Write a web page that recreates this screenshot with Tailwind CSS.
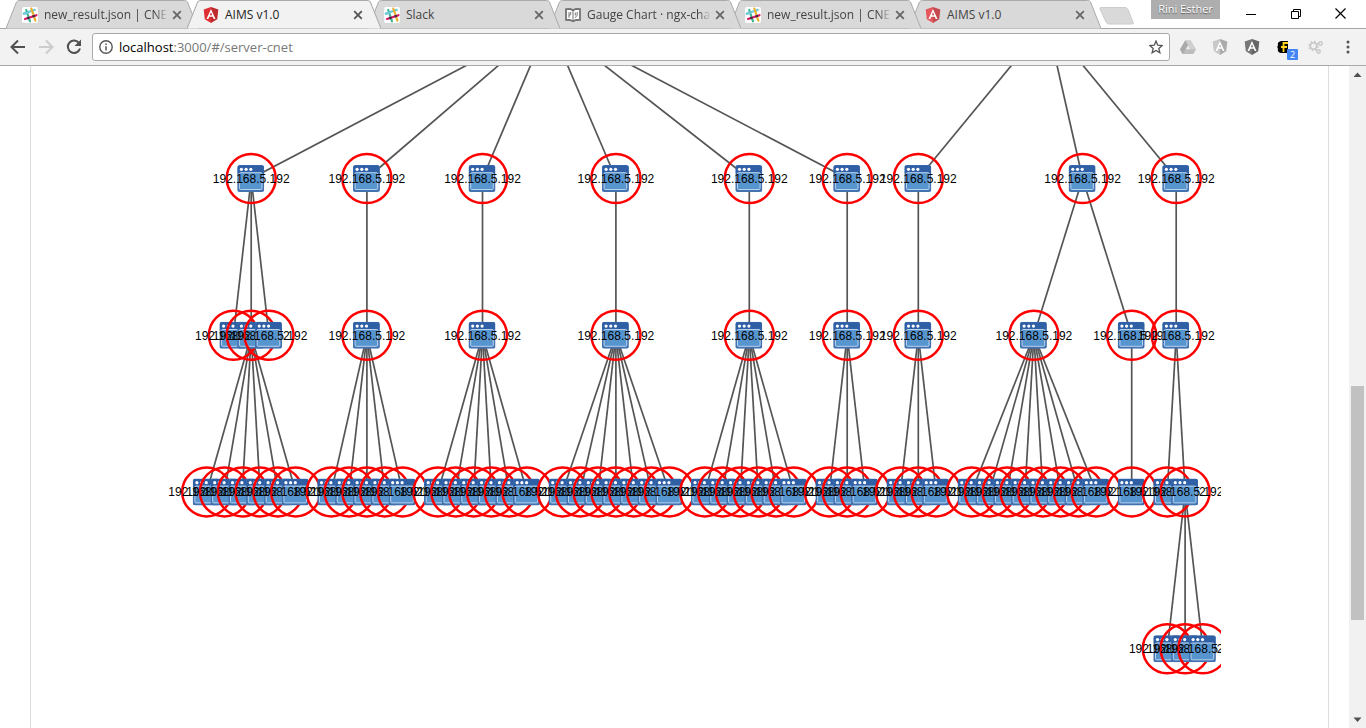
<!DOCTYPE html>
<html lang="en">
<head>
<meta charset="utf-8">
<title>AIMS v1.0</title>
<script src="https://cdn.jsdelivr.net/npm/@tailwindcss/browser@4"></script>
</head>
<body class="flex h-screen flex-col overflow-hidden bg-white font-['Open_Sans','Noto_Sans',sans-serif] text-xs text-[#333]">

<svg class="hidden" aria-hidden="true">
  <symbol id="slack" viewBox="0 0 16 16">
    <rect width="16" height="16" rx="2" fill="#fff"/>
    <g fill="none" stroke-width="2.2" stroke-linecap="round">
      <path d="M1.8 6.5 12.8 2.9" stroke="#70cadb"/>
      <path d="M9.3 1.5 13.4 13.6" stroke="#e9b22e"/>
      <path d="M4.2 3 8 14.4" stroke="#3eb890"/>
      <path d="M1.8 6.9 5.3 5.7" stroke="#70cadb"/>
      <path d="M3 12 14.5 8.2" stroke="#e01765"/>
      <path d="M5.8 11.1 6.8 10.8M11.2 9.3 12.2 9" stroke="#472a49"/>
    </g>
  </symbol>
  <symbol id="angular" viewBox="0 0 16 16">
    <path d="M8 0 15.3 2.6 14.2 12.2 8 16 1.8 12.2.7 2.6Z" fill="currentColor"/>
    <path d="M8 0 15.3 2.6 14.2 12.2 8 16Z" fill="#000" opacity=".14"/>
    <path d="M8 2 3.5 12h1.8l.9-2.3h3.6l.9 2.3h1.8ZM8 5.2 9.2 8.2H6.8Z" fill="#fff" fill-rule="evenodd"/>
  </symbol>
  <symbol id="book" viewBox="0 0 16 16">
    <path d="M1 2.2 5 2 8 3.2 11 2l4 .2v10.6l-4 .2-3 1.3L5 13l-4-.2Z" fill="#fff" stroke="#737373" stroke-width="1.8"/>
    <path d="M8 3.2V14M4 5.2v5.6M5.7 5v2.5L4 8.8M10.3 5.5v3M12.2 5v3.2l-2 2.6" fill="none" stroke="#737373" stroke-width="1"/>
  </symbol>
  <symbol id="x" viewBox="0 0 10 10"><path d="M1.2 1.2 8.8 8.8M8.8 1.2 1.2 8.8" stroke="currentColor" stroke-width="1.8"/></symbol>
  <symbol id="tab" viewBox="0 0 192 29" preserveAspectRatio="none">
    <path d="M0 28.5 10.5 2Q11.500.5 13.500.5H178.500Q180.500.5 181.500 2L192 28.5" fill="currentColor" stroke="#aaa"/>
  </symbol>
  <symbol id="server" viewBox="0 0 27 27">
    <rect x="0" y="0" width="27" height="27" rx="2.500" fill="#4372b0"/>
    <path d="M.5 8V3Q.5.5 3 .5H24Q26.500.5 26.500 3V8Z" fill="#2f5fa5"/>
    <rect x="2.200" y="7.700" width="22.600" height="16.800" rx="1" fill="#5795cf" stroke="#b9d3ee"/>
    <g fill="#fff"><circle cx="4.200" cy="4.300" r="1.600"/><circle cx="8.900" cy="4.300" r="1.600"/><circle cx="13.600" cy="4.300" r="1.600"/></g>
  </symbol>
</svg>

<header class="shrink-0">
  <div class="relative flex h-[29px] border-b border-[#a6a6a6]">
    <nav class="flex h-[29px] pl-[6px]" aria-label="Tabs">
      <div class="relative z-20 flex h-[29px] w-48 items-center text-[#d9d9d9]">
        <svg class="absolute inset-0 h-full w-full"><use href="#tab"/></svg>
        <a href="#" class="relative flex min-w-0 flex-1 items-center gap-1.5 pl-4 text-[#444]"><svg class="size-4 shrink-0"><use href="#slack"/></svg><span class="overflow-hidden whitespace-nowrap mask-r-from-90%">new_result.json | CNET</span></a>
        <button aria-label="Close tab" class="relative mr-4 ml-1 text-[#666]"><svg class="size-2.5"><use href="#x"/></svg></button>
      </div>
      <div class="relative z-30 -ml-[11px] flex h-[29px] w-[194px] items-center text-[#f2f2f2]">
        <svg class="absolute inset-0 h-full w-full"><use href="#tab"/></svg>
        <a href="#" class="relative flex min-w-0 flex-1 items-center gap-1.5 pl-4 text-[#222]"><svg class="size-4 shrink-0 text-[#dd3035]"><use href="#angular"/></svg><span>AIMS v1.0</span></a>
        <button aria-label="Close tab" class="relative mr-[18px] ml-1 text-[#555]"><svg class="size-2.5"><use href="#x"/></svg></button>
      </div>
      <div class="relative z-20 -ml-[13px] flex h-[29px] w-48 items-center text-[#d9d9d9]">
        <svg class="absolute inset-0 h-full w-full"><use href="#tab"/></svg>
        <a href="#" class="relative flex min-w-0 flex-1 items-center gap-1.5 pl-4 text-[#444]"><svg class="size-4 shrink-0"><use href="#slack"/></svg><span>Slack</span></a>
        <button aria-label="Close tab" class="relative mr-4 ml-1 text-[#666]"><svg class="size-2.5"><use href="#x"/></svg></button>
      </div>
      <div class="relative z-10 -ml-[11px] flex h-[29px] w-48 items-center text-[#d9d9d9]">
        <svg class="absolute inset-0 h-full w-full"><use href="#tab"/></svg>
        <a href="#" class="relative flex min-w-0 flex-1 items-center gap-1.5 pl-4 text-[#444]"><svg class="size-4 shrink-0"><use href="#book"/></svg><span class="overflow-hidden whitespace-nowrap mask-r-from-90%">Gauge Chart · ngx-charts</span></a>
        <button aria-label="Close tab" class="relative mr-4 ml-1 text-[#666]"><svg class="size-2.5"><use href="#x"/></svg></button>
      </div>
      <div class="relative z-[5] -ml-[12px] flex h-[29px] w-48 items-center text-[#d9d9d9]">
        <svg class="absolute inset-0 h-full w-full"><use href="#tab"/></svg>
        <a href="#" class="relative flex min-w-0 flex-1 items-center gap-1.5 pl-4 text-[#444]"><svg class="size-4 shrink-0"><use href="#slack"/></svg><span class="overflow-hidden whitespace-nowrap mask-r-from-90%">new_result.json | CNET</span></a>
        <button aria-label="Close tab" class="relative mr-4 ml-1 text-[#666]"><svg class="size-2.5"><use href="#x"/></svg></button>
      </div>
      <div class="relative z-0 -ml-[12px] flex h-[29px] w-48 items-center text-[#d9d9d9]">
        <svg class="absolute inset-0 h-full w-full"><use href="#tab"/></svg>
        <a href="#" class="relative flex min-w-0 flex-1 items-center gap-1.5 pl-4 text-[#444]"><svg class="size-4 shrink-0 text-[#e5575c]"><use href="#angular"/></svg><span>AIMS v1.0</span></a>
        <button aria-label="Close tab" class="relative mr-4 ml-1 text-[#666]"><svg class="size-2.5"><use href="#x"/></svg></button>
      </div>
    </nav>
    <button aria-label="New tab" class="-ml-0.5 flex h-[29px] shrink-0 items-center pt-0.5"><svg width="36" height="18" viewBox="0 0 36 18"><path d="M2 .5H26Q28 .5 29 2.500L34 15Q35 17 33 17H10Q8 17 7 15L1 2Q.5.5 2 .5Z" fill="#d9d9d9" stroke="#ccc"/></svg></button>
    <div class="ml-auto flex shrink-0 pr-[3px]">
      <div class="mr-2 h-[19px] w-[69px] bg-[#aeaeae] text-center text-[11px] leading-[18px] text-white text-shadow-[0_1px_1px_#555]">Rini Esther</div>
      <button aria-label="Minimize" class="flex h-[27px] w-[45px] items-center justify-center"><svg width="10" height="10"><path d="M0 5.500H10" stroke="#000"/></svg></button>
      <button aria-label="Restore" class="flex h-[27px] w-[45px] items-center justify-center"><svg width="10" height="10" fill="none" stroke="#000"><path d="M.5 2.500H7.500V9.500H.5ZM2.500 2.500V.5H9.500V7.500H7.500"/></svg></button>
      <button aria-label="Close" class="flex h-[27px] w-[45px] items-center justify-center"><svg width="11" height="11"><path d="M.5.5 10.500 10.500M10.500.5.5 10.500" stroke="#000" stroke-width="1.200"/></svg></button>
    </div>
  </div>

  <div class="flex h-[37px] items-center border-b border-[#aaa] bg-[#f2f2f2] pr-2.5 pl-[9px]">
    <button aria-label="Back" class="mr-2.5"><svg width="18" height="18" viewBox="0 0 18 18" fill="none" stroke="#505050" stroke-width="2"><path d="M16 9H3M9 2.500 2.500 9 9 15.500"/></svg></button>
    <button aria-label="Forward" class="mr-2.5"><svg width="18" height="18" viewBox="0 0 18 18" fill="none" stroke="#ccc" stroke-width="2"><path d="M2 9H15M9 2.500 15.500 9 9 15.500"/></svg></button>
    <button aria-label="Reload" class="mr-[9px]"><svg width="18" height="18" viewBox="0 0 18 18"><path d="M14.200 5.200A6.200 6.200 0 1 0 15 10.500" fill="none" stroke="#505050" stroke-width="2"/><path d="M16 1.500V8H9.500Z" fill="#505050"/></svg></button>
    <div class="flex h-7 flex-1 items-center rounded-[3px] border border-[#aaa] bg-white px-1.5">
      <svg class="mr-1.5" width="14" height="14" viewBox="0 0 14 14"><circle cx="7" cy="7" r="6.200" fill="none" stroke="#555" stroke-width="1.400"/><path d="M7 6.200V10.500M7 3.400V5" stroke="#555" stroke-width="1.500"/></svg>
      <a href="#/server-cnet" aria-label="Address" class="flex-1 text-[13px] leading-6 text-[#777]"><span class="text-black">localhost</span>:3000/#/server-cnet</a>
      <button aria-label="Bookmark"><svg width="14" height="14" viewBox="0 0 14 14"><path d="M7 1 8.700 5.200 13.200 5.500 9.800 8.400 10.900 12.800 7 10.400 3.100 12.800 4.200 8.400.8 5.500 5.300 5.200Z" fill="none" stroke="#555" stroke-width="1.300"/></svg></button>
    </div>
    <div class="ml-2.5 flex shrink-0 items-center gap-4">
      <button aria-label="Drive"><svg width="16" height="16" viewBox="0 0 16 16"><path d="M5.300 1.500H10.700L16 10.500 13.300 15H2.700L0 10.500Z" fill="#bdbdbd"/><path d="M5.300 1.500H10.700L16 10.500H10.500Z" fill="#cfcfcf"/><path d="M0 10.500 5.300 1.500 8 6 2.700 15Z" fill="#aaa"/><path d="M8 6.500 10 10.200H6Z" fill="#f2f2f2"/></svg></button>
      <button aria-label="Angular inspector, inactive"><svg class="size-4 text-[#c8c8c8]"><use href="#angular"/></svg></button>
      <button aria-label="Angular inspector"><svg class="size-4 text-[#777]"><use href="#angular"/></svg></button>
      <button aria-label="Page feeds, 2" class="relative"><svg width="16" height="16" viewBox="0 0 16 16"><path d="M5 2H12V14H5Q1 13 2 10Q.5 8 2 6Q1 3 5 2Z" fill="#000"/><path d="M7.500 13V4H12M7.500 8H11M5 8H8" fill="none" stroke="#ffd21f" stroke-width="1.800"/></svg><span class="absolute top-2.5 left-[11px] h-[11px] w-[11px] rounded-[1px] bg-[#4285f4] text-center text-[9px] leading-[11px] text-white">2</span></button>
      <button aria-label="Settings extension"><svg width="16" height="16" viewBox="0 0 16 16" fill="none" stroke="#c8c8c8"><circle cx="5.500" cy="7" r="3.200" stroke-width="1.600"/><circle cx="5.500" cy="7" r="4.500" stroke-width="1.500" stroke-dasharray="1.700 1.830"/><circle cx="12.500" cy="4.500" r="1.700" stroke-width="1.500"/><circle cx="10.500" cy="12.500" r="1.700" stroke-width="1.500"/></svg></button>
      <button aria-label="Menu"><svg width="16" height="16" viewBox="0 0 16 16" fill="#555"><circle cx="8" cy="3" r="1.500"/><circle cx="8" cy="8" r="1.500"/><circle cx="8" cy="13" r="1.500"/></svg></button>
    </div>
  </div>
</header>

<div class="flex min-h-0 flex-1">
  <main class="ml-[30px] mr-5 flex-1 overflow-hidden border-x border-[#ddd]">
    <svg id="tree" class="font-['Liberation_Sans',Arial,sans-serif]" width="1190" height="662" viewBox="31 66 1190 662" role="img" aria-label="Server tree"></svg>
  </main>
  <div class="flex w-[17px] flex-col items-center bg-[#f1f1f1]" aria-hidden="true">
    <svg width="17" height="17"><path d="M4.500 11H12.500L8.500 6.500Z" fill="#505050"/></svg>
    <div class="flex w-[13px] flex-1 flex-col">
      <div class="grow-[303]"></div>
      <div class="grow-[234] bg-[#c1c1c1]"></div>
      <div class="grow-[91]"></div>
    </div>
    <svg width="17" height="17"><path d="M4.500 6.500H12.500L8.500 11Z" fill="#505050"/></svg>
  </div>
</div>

<script>
  // Each node is [x, level, children]; leaves(x, level, n) spaces n siblings evenly around x.
  const GAP = 17.8, LEVEL_Y = [22, 178.5, 335.3, 491.9, 648.8];
  const leaves = (x, level, n) =>
    Array.from({ length: n }, (_, i) => [x + (i - (n - 1) / 2) * GAP, level, []]);
  const branch = (x, n) => [x, 1, [[x, 2, leaves(x, 3, n)]]];

  const first = [251.2, 1, leaves(251.2, 2, 3)];
  first[2][1][2] = leaves(251.2, 3, 6);
  const last = branch(1176.2, 2);
  last[2][0][2][1][2] = leaves(1185.1, 4, 3);

  const roots = [
    [549, 0, [first, branch(366.9, 5), branch(482.5, 6), branch(615.9, 7), branch(749.3, 6), branch(847.2, 3)]],
    [1047.2, 0, [branch(918.3, 3),
      [1082.6, 1, [[1033.9, 2, leaves(1033.9, 3, 8)], [1131.7, 2, leaves(1131.7, 3, 1)]]],
      last]],
  ];

  let lines = '';
  const rows = ['', '', '', '', ''];
  (function walk(nodes) {
    for (const [x, level, children] of nodes) {
      const y = LEVEL_Y[level];
      for (const [cx, cl] of children)
        lines += `<path d="M${x} ${y}L${cx} ${LEVEL_Y[cl]}"/>`;
      rows[level] += `<g><circle cx="${x}" cy="${y}" r="24.500" fill="none" stroke="red" stroke-width="2.500"/>` +
        `<use href="#server" x="${x - 14}" y="${y - 13.5}" width="27" height="27"/>` +
        `<text x="${x}" y="${y + 4.5}" text-anchor="middle" font-size="12" fill="#000">192.168.5.192</text></g>`;
      walk(children);
    }
  })(roots);
  document.getElementById('tree').innerHTML =
    `<g stroke="#555" stroke-width="1.700">${lines}</g>` + rows.join('');
</script>
</body>
</html>
